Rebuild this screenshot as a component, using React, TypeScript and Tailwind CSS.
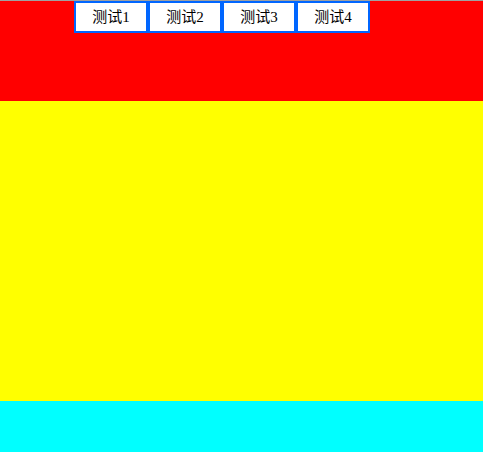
const tabs = ["测试1", "测试2", "测试3", "测试4"];

export default function App() {
  return (
    <div className="flex w-[483px] flex-col font-['Liberation_Serif','Noto_Sans_CJK_SC',serif]">
      <div className="h-[101px] border-t border-[#a0a0a0] bg-[#ff0000]">
        <div className="ml-[74px] flex">
          {tabs.map((t) => (
            <button
              key={t}
              className="flex h-[32px] w-[74px] items-center justify-center border-2 border-[#0066ff] bg-white text-[15px] text-black"
            >
              {t}
            </button>
          ))}
        </div>
      </div>
      <div className="h-[300px] bg-[#ffff00]" />
      <div className="h-[51px] bg-[#00ffff]" />
    </div>
  );
}
